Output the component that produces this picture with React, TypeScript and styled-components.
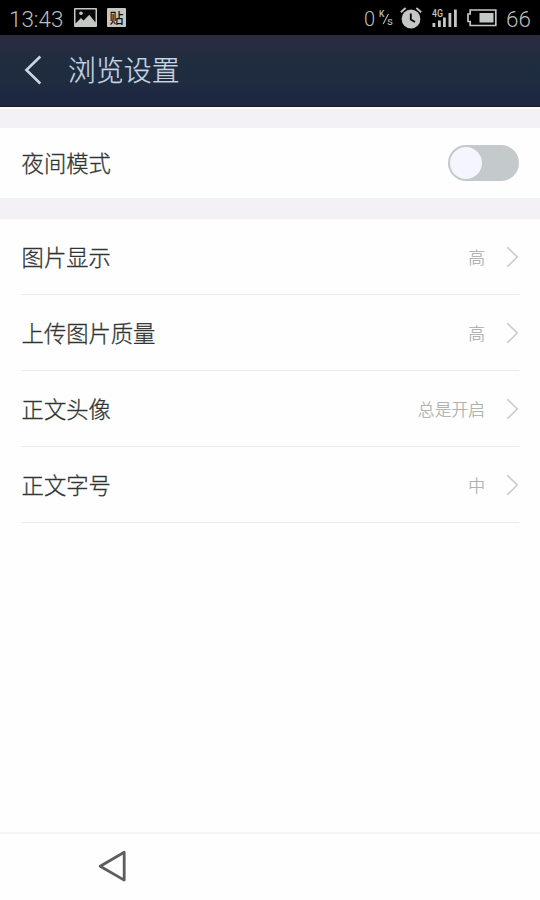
import React from 'react';
import styled, { createGlobalStyle } from 'styled-components';

const GlobalStyle = createGlobalStyle`
  * { box-sizing: border-box; }
  body { margin: 0; background: #fefefe; }
`;

const Screen = styled.div`
  width: 540px;
  height: 900px;
  display: flex;
  flex-direction: column;
  overflow: hidden;
  background: #fefefe;
  font-family: Roboto, 'Noto Sans CJK SC', sans-serif;
`;

const StatusBar = styled.div`
  height: 35px;
  flex: none;
  display: flex;
  align-items: center;
  justify-content: space-between;
  padding: 0 8px 0 9px;
  background: #000;
  color: #bdbfbd;
`;

const StatusGroup = styled.div`
  display: flex;
  align-items: center;
  height: 35px;
  svg { display: block; flex: none; overflow: visible; }
`;

const StatusText = styled.span<{ $size: number; $width: number }>`
  font-size: ${p => p.$size}px;
  width: ${p => p.$width}px;
  font-weight: 300;
  line-height: 34px;
  padding-top: 2px;
  white-space: nowrap;
`;

const Gap = styled.span<{ $w: number }>`
  width: ${p => p.$w}px;
  flex: none;
`;

const PostBadge = styled.span`
  width: 19px;
  height: 19px;
  display: flex;
  align-items: center;
  justify-content: center;
  border-radius: 1px;
  background: #c4c8c4;
  color: #111;
  font: 500 14px/19px 'Noto Sans CJK SC', sans-serif;
`;

const Header = styled.header`
  height: 72px;
  flex: none;
  display: flex;
  align-items: center;
  padding: 0 0 2px 24px;
  background: linear-gradient(#2a2b3f 0, #272c40 14px, #1f2d40 24px, #1f2c40 48px, #1e2741 58px, #1e2741 100%);
  border-bottom: 1px solid #171b26;
  svg { display: block; }
`;

const Title = styled.h1`
  margin: -2px 0 0 26px;
  color: #c9d5e2;
  font: 300 27.9px/40px 'Noto Sans CJK SC', sans-serif;
  -webkit-text-stroke: 0.25px #c9d5e2;
`;

const Divider = styled.div<{ $edge: string }>`
  height: 21px;
  flex: none;
  background: #f3f1f5;
  border-top: 2px solid ${p => p.$edge};
`;

const Row = styled.div<{ $h: number; $line?: boolean }>`
  height: ${p => p.$h}px;
  flex: none;
  display: flex;
  align-items: center;
  margin: 0 21px;
  border-bottom: ${p => (p.$line ? '1px solid #ebebeb' : '0')};
  svg { display: block; flex: none; }
`;

const Label = styled.span`
  flex: 1;
  padding: 0 0 2px 0.6px;
  color: #303432;
  font: 300 22.3px/32px 'Noto Sans CJK SC', sans-serif;
  -webkit-text-stroke: 0.3px #303432;
`;

const Value = styled.span`
  margin-right: 21px;
  color: #a6acaa;
  font: 300 16.8px/24px 'Noto Sans CJK SC', sans-serif;
  -webkit-text-stroke: 0.2px #a6acaa;
`;

const Toggle = styled.div`
  width: 71px;
  height: 36px;
  display: flex;
  align-items: center;
  padding-left: 2px;
  border-radius: 18px;
  background: #c4c9cb;
`;

const Knob = styled.div`
  width: 32px;
  height: 32px;
  border-radius: 50%;
  background: #f5f5fd;
`;

const Settings = styled.main`
  flex: 1;
`;

const NavBar = styled.nav`
  height: 68px;
  flex: none;
  padding: 16px 0 0 97px;
  border-top: 2px solid #f4f4f4;
  svg { display: block; }
`;

const rows = [
  { label: '图片显示', value: '高' },
  { label: '上传图片质量', value: '高' },
  { label: '正文头像', value: '总是开启' },
  { label: '正文字号', value: '中' },
];

const PictureIcon = () => (
  <svg width="23" height="19" viewBox="0 0 23 19">
    <rect width="23" height="19" rx="1" fill="#c4c8c4" />
    <path d="M1.5 1.5h20v13L15.3 6.8 9.5 12.5 7 10 1.5 15.5z" fill="#080808" />
    <circle cx="7" cy="5.2" r="1.8" fill="#c4c8c4" />
  </svg>
);

const SpeedUnit = () => (
  <svg width="15" height="18" viewBox="0 0 15 18" fill="#bdbfbd" fontFamily="Roboto, sans-serif">
    <text x="0" y="8" fontSize="8.5" fontWeight="500">K</text>
    <path d="M4.2 15 9.4 5" stroke="#bdbfbd" strokeWidth="1.1" />
    <text x="8" y="15.5" fontSize="11.5">s</text>
  </svg>
);

const AlarmIcon = () => (
  <svg width="22" height="22" viewBox="0 0 22 22" fill="none" stroke="#c4c8c4">
    <circle cx="11" cy="12" r="9.4" fill="#c4c8c4" stroke="none" />
    <path d="M.8 5.2 5.6 1M21.2 5.2 16.4 1" strokeWidth="1.8" />
    <path d="M10.8 6.5v6l4.2 2.5" stroke="#080808" strokeWidth="1.9" />
  </svg>
);

const SignalIcon = () => (
  <svg width="26" height="22" viewBox="0 -2 26 22" fill="#c4c8c4">
    <text x="0" y="7.5" fontSize="10.5" fontWeight="500" textLength="11" lengthAdjust="spacingAndGlyphs" fontFamily="Roboto, sans-serif">4G</text>
    <path d="M.5 14h2.8v4H.5zM6 11.5h2.8V18H6zM11 8.5h2.8V18H11zM16.5 4h2.8v14h-2.8zM22 .5h2.8V18H22z" />
  </svg>
);

const BatteryIcon = () => (
  <svg width="30" height="18" viewBox="0 0 30 18">
    <path d="M3.2 1h25.6v15.5H3.2v-4H1V5h2.2z" fill="none" stroke="#c4c8c4" strokeWidth="1.7" />
    <path d="M12.5 4H26.5v9.5h-14z" fill="#c4c8c4" />
  </svg>
);

const BackIcon = () => (
  <svg width="18" height="30" viewBox="0 0 18 30">
    <path d="M16.3 1.5 2.4 15l13.9 13.5" fill="none" stroke="#c9d5e2" strokeWidth="2.6" />
  </svg>
);

const Chevron = () => (
  <svg width="13" height="22" viewBox="0 0 13 22">
    <path d="m1.2 1.2 10 9.8-10 9.8" fill="none" stroke="#c8cccb" strokeWidth="1.6" />
  </svg>
);

const NavBackIcon = () => (
  <svg width="30" height="34" viewBox="0 0 30 34">
    <path d="M27.2 2.3v27.8L3.2 16.2z" fill="none" stroke="#5e5e5c" strokeWidth="2.8" strokeLinejoin="round" />
  </svg>
);

export default function App() {
  return (
    <Screen>
      <GlobalStyle />
      <StatusBar>
        <StatusGroup>
          <StatusText $size={22.4} $width={65}>13:43</StatusText>
          <PictureIcon />
          <Gap $w={10} />
          <PostBadge>贴</PostBadge>
        </StatusGroup>
        <StatusGroup>
          <StatusText $size={20} $width={15}>0</StatusText>
          <SpeedUnit />
          <Gap $w={6} />
          <AlarmIcon />
          <Gap $w={10} />
          <SignalIcon />
          <Gap $w={9} />
          <BatteryIcon />
          <Gap $w={9} />
          <StatusText $size={22.4} $width={26}>66</StatusText>
        </StatusGroup>
      </StatusBar>
      <Header>
        <BackIcon />
        <Title>浏览设置</Title>
      </Header>
      <Settings>
        <Divider $edge="#faf9fb" />
        <Row $h={70}>
          <Label>夜间模式</Label>
          <Toggle><Knob /></Toggle>
        </Row>
        <Divider $edge="#f0f3f6" />
        {rows.map(r => (
          <Row key={r.label} $h={76} $line>
            <Label>{r.label}</Label>
            <Value>{r.value}</Value>
            <Chevron />
          </Row>
        ))}
      </Settings>
      <NavBar><NavBackIcon /></NavBar>
    </Screen>
  );
}
